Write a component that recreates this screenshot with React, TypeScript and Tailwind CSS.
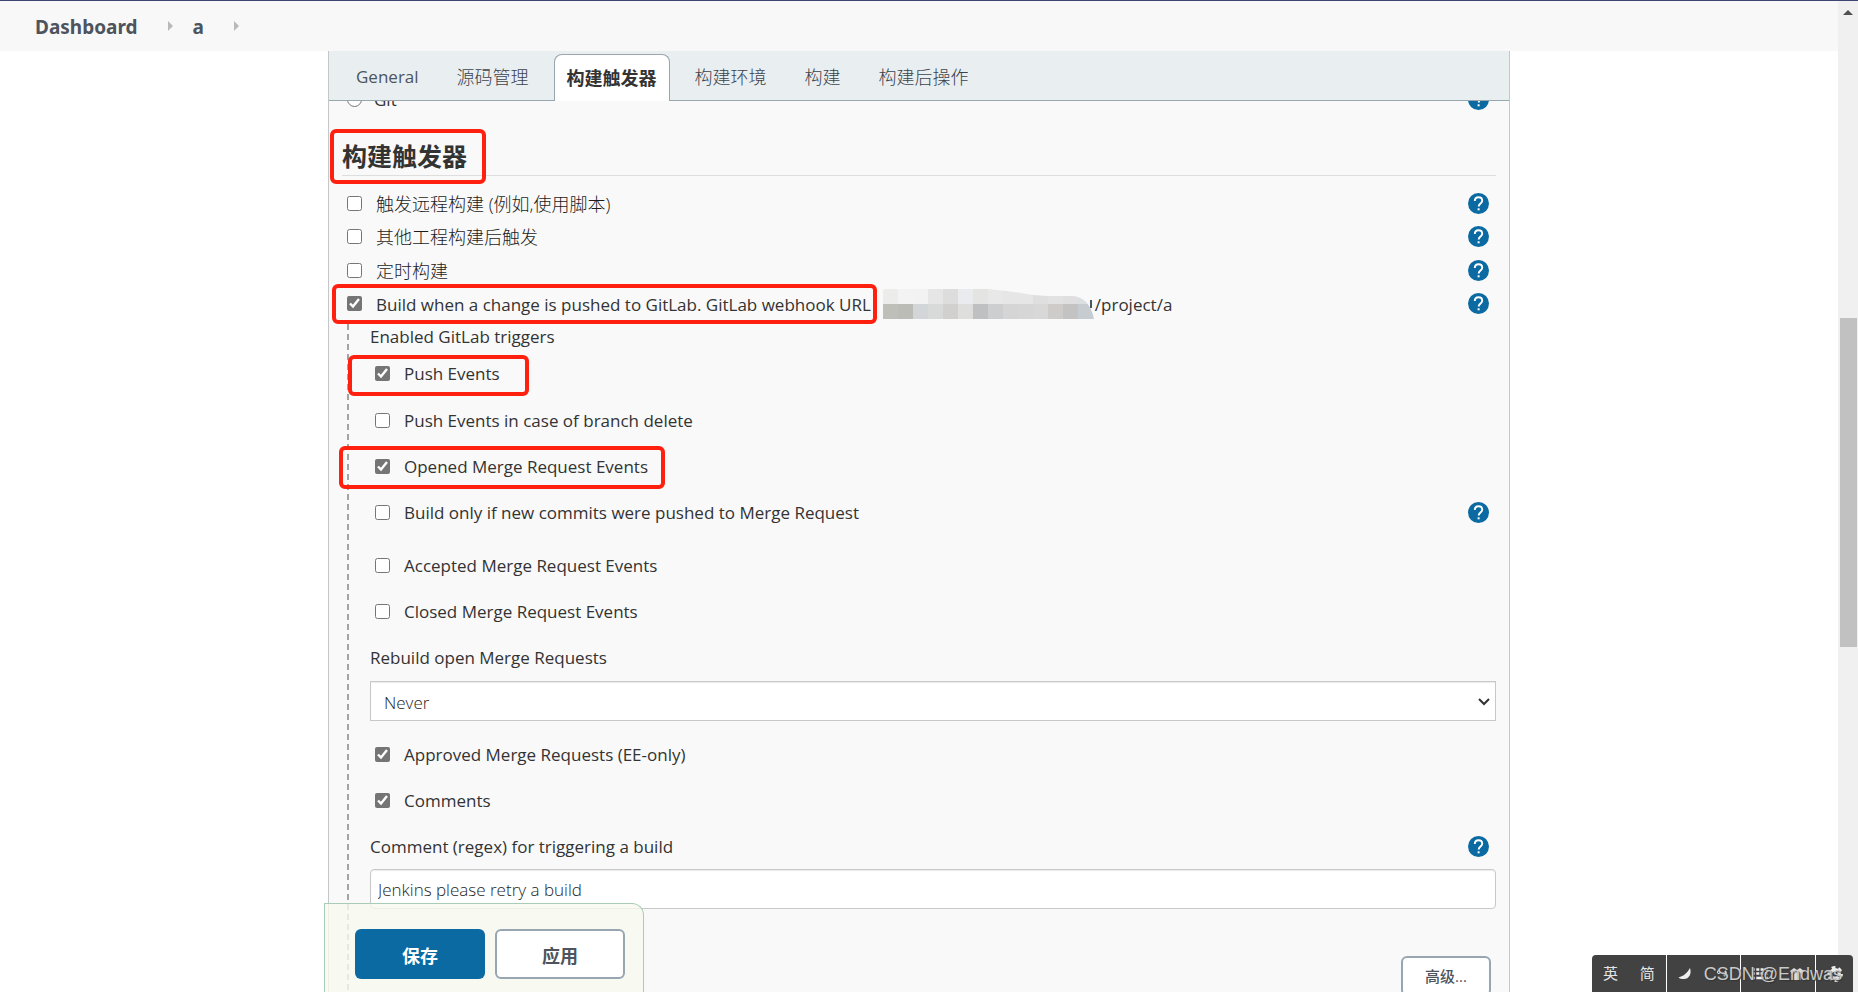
import type { ReactNode } from "react";

const tabs = ["General", "源码管理", "构建触发器", "构建环境", "构建", "构建后操作"];

const topMosaic = ["#ececea", "#f3f3f3", "#f2f2f2", "#e6e6e7", "#dddddd", "#e9ebee", "#e4e4e2", "#e8e8e8", "#e6e6e6", "#e6e6e6", "#dfdfdf", "#e2e2e2", "#dfdfdf", "#dcdfe0"];
const bottomMosaic = ["#bfbfba", "#bcbcb6", "#d3d6d8", "#d7dad9", "#d1d0ce", "#dededc", "#bfc0c2", "#cdced0", "#d5d5d6", "#d6d6d6", "#d8d8d8", "#cecbc9", "#c3c3c4", "#c7ccd0"];

function Highlight({ className }: { className: string }) {
  return <span aria-hidden="true" className={`pointer-events-none absolute z-10 rounded-md border-4 border-[#ff2010] ${className}`} />;
}

function HelpButton() {
  return (
    <button type="button" aria-label="Help" className="mr-[7px] ml-auto size-[21px] shrink-0">
      <svg viewBox="0 0 21 21" className="block size-full">
        <circle cx="10.5" cy="10.5" r="10.5" fill="#0b6aa2" />
        <path d="M6.8 8.1C6.8 5.8 8.4 4.3 10.5 4.3s3.7 1.4 3.7 3.4c0 2.6-3.5 3.1-3.5 5.8" fill="none" stroke="#fff" strokeWidth="1.9" />
        <rect x="9.6" y="15.3" width="2" height="2" fill="#fff" />
      </svg>
    </button>
  );
}

type CheckRowProps = {
  id: string;
  children: ReactNode;
  checked?: boolean;
  help?: boolean;
  nested?: boolean;
  cjk?: boolean;
  highlight?: string;
  after?: ReactNode;
};

function CheckRow({ id, children, checked, help, nested, cjk, highlight, after }: CheckRowProps) {
  return (
    <div className={`relative flex items-center ${nested ? "h-[46px] pl-[5px]" : "h-[33px] pl-[5px]"}`}>
      <input id={id} type="checkbox" defaultChecked={checked} className="size-[15px] shrink-0 accent-[#757575]" />
      <label htmlFor={id} className={`pl-3.5 whitespace-nowrap ${cjk ? "text-lg font-light text-[#1c1c1c]" : "pt-0.5 text-[17px] font-medium"}`}>
        {children}
      </label>
      {after}
      {help && <HelpButton />}
      {highlight && <Highlight className={highlight} />}
    </div>
  );
}

function Mosaic() {
  return (
    <svg viewBox="0 0 212 30" className="ml-3 h-[30px] w-[212px] shrink-0" aria-hidden="true">
      <clipPath id="smear">
        <path d="M0 2Q0 0 2 0H105Q125 2 138 4Q152 7 165 7H188Q206 7 211 30H0Z" />
      </clipPath>
      <path d="M208 11v8" stroke="#456" strokeWidth="2" />
      <g clipPath="url(#smear)">
        {topMosaic.map((fill, i) => (
          <rect key={`t${i}`} x={i * 15} y="0" width={i === 13 ? 17 : 15} height="15" fill={fill} />
        ))}
        {bottomMosaic.map((fill, i) => (
          <rect key={`b${i}`} x={i * 15} y="15" width={i === 13 ? 17 : 15} height="15" fill={fill} />
        ))}
      </g>
    </svg>
  );
}

function Crumb() {
  return (
    <svg viewBox="0 0 5 10" className="h-2.5 w-[5px]" aria-hidden="true">
      <path d="M0 0l5 5-5 5z" fill="#b9b9b9" />
    </svg>
  );
}

function ImeBar() {
  return (
    <div className="absolute right-[5px] bottom-0 z-30 flex h-[37px] w-[261px] items-center rounded-t-sm bg-[#3c3c3c]/97 text-[15px] text-[#e4e4e4]">
      <div className="flex h-full flex-1 items-center justify-around border-r border-white">
        <span>英</span>
        <span>简</span>
      </div>
      <div className="flex h-full flex-1 items-center justify-around border-r border-white">
        <svg viewBox="0 0 14 14" className="size-3.5">
          <path d="M12 1c2 6-1 11-6 11-2.500 0-4.500-.5-5.500-1.500C6 9 9 6 12 1z" fill="#eee" />
        </svg>
        <svg viewBox="0 0 14 14" className="size-3.5">
          <circle cx="4" cy="5" r="1.700" fill="none" stroke="#ddd" />
          <path d="M10 4q2 2-1 5" fill="none" stroke="#ddd" strokeWidth="2" />
        </svg>
      </div>
      <div className="flex h-full flex-1 items-center justify-around border-r border-white">
        <svg viewBox="0 0 16 12" className="h-3 w-4">
          <path d="M0 1.500h16M0 5.500h16" stroke="#eee" strokeWidth="2.500" strokeDasharray="3 1.300" />
          <path d="M0 10h16" stroke="#eee" strokeWidth="2.500" strokeDasharray="3 1.300 7.500 1.300" />
        </svg>
        <svg viewBox="0 0 16 14" className="h-3.5 w-4">
          <path d="M5 1l3 2 3-2 4 3-2 3-1.500-1v7h-7V6L3 7 1 4z" fill="#ddd" />
        </svg>
      </div>
      <div className="flex h-full w-[37px] items-center justify-center">
        <svg viewBox="0 0 16 16" className="size-4">
          <circle cx="8" cy="8" r="4.300" fill="none" stroke="#eee" strokeWidth="3.400" />
          <circle cx="8" cy="8" r="6.700" fill="none" stroke="#eee" strokeWidth="2.500" strokeDasharray="3.800 3.200" />
        </svg>
      </div>
      <span className="absolute right-[11px] bottom-1 font-['Liberation_Sans',sans-serif] text-lg whitespace-nowrap text-[#c9c9c9] [text-shadow:1px_1px_1px_#333]">
        CSDN @Endwas
      </span>
    </div>
  );
}

export default function App() {
  return (
    <div className="relative flex h-screen overflow-hidden bg-white font-['Open_Sans','Noto_Sans_CJK_SC',sans-serif] text-[#333]">
      <div className="flex min-w-0 flex-1 flex-col">
        <header className="flex h-[51px] shrink-0 items-center border-t border-[#3f4472] bg-[#f8f8f8] pl-[35px] font-['Noto_Sans',sans-serif] text-[19px] font-bold text-[#4d545d]">
          <a href="#dashboard" className="pt-0.5 pr-[30px]">Dashboard</a>
          <Crumb />
          <a href="#a" className="pt-0.5 pr-[30px] pl-5">a</a>
          <Crumb />
        </header>

        <main className="relative mx-auto flex min-h-0 w-full max-w-[1182px] flex-1 flex-col border-x border-[#c4c6c8] bg-[#f9f9f9]">
          <nav className="z-10 flex h-[50px] shrink-0 items-end gap-3 border-b border-[#98a6ae] bg-[#e9eef1] pl-3.5">
            {tabs.map((tab) => {
              const active = tab === "构建触发器";
              return (
                <a
                  key={tab}
                  href={`#${tab}`}
                  className={`flex h-[47px] items-center px-3 whitespace-nowrap ${
                    active
                      ? "-mb-px rounded-t-lg border border-b-0 border-[#98a6ae] bg-white text-lg font-bold text-[#333]"
                      : tab === "General"
                        ? "border border-transparent text-[17px] text-[#4d545d]"
                        : "border border-transparent text-lg font-light text-[#3c434c]"
                  }`}
                >
                  {tab}
                </a>
              );
            })}
          </nav>

          <form className="min-h-0 flex-1 overflow-hidden px-[13px]">
            <div className="-mt-[17px] flex h-[30px] items-center pl-[5px]">
              <input id="git" type="radio" name="scm" className="size-[15px]" />
              <label htmlFor="git" className="pt-0.5 pl-3 text-[17px]">Git</label>
              <HelpButton />
            </div>

            <div className="relative mt-6 mb-[11px]">
              <h2 className="h-[38px] border-b border-[#dedede] text-[25px] leading-[37px] font-bold">构建触发器</h2>
              <Highlight className="-top-[9px] -left-3 h-[55px] w-[156px]" />
            </div>

            <CheckRow id="remote" cjk help>触发远程构建 (例如,使用脚本)</CheckRow>
            <CheckRow id="upstream" cjk help>其他工程构建后触发</CheckRow>
            <div className="mt-px">
              <CheckRow id="timer" cjk help>定时构建</CheckRow>
            </div>
            <CheckRow
              id="gitlab"
              checked
              help
              highlight="-top-[3px] -left-2.5 h-10 w-[545px]"
              after={
                <>
                  <Mosaic />
                  <span className="pt-0.5 text-[17px] font-medium">/project/a</span>
                </>
              }
            >
              Build when a change is pushed to GitLab. GitLab webhook URL
            </CheckRow>

            <div className="flex">
              <svg className="mt-1 ml-[5px] w-0.5 shrink-0 self-stretch" aria-hidden="true">
                <line x1="1" y1="0" x2="1" y2="100%" stroke="#a3a3a3" strokeWidth="2" strokeDasharray="6 4" />
              </svg>
              <div className="min-w-0 flex-1 pb-10 pl-[21px]">
                <div className="flex h-[30px] items-end text-[17px] leading-[26px] font-medium">Enabled GitLab triggers</div>
                <CheckRow id="push" nested checked highlight="top-[5px] -left-[22px] h-[41px] w-[181px]">Push Events</CheckRow>
                <div className="mt-px">
                  <CheckRow id="push-delete" nested>Push Events in case of branch delete</CheckRow>
                </div>
                <CheckRow id="opened" nested checked highlight="top-[3px] -left-[31px] h-[43px] w-[326px]">Opened Merge Request Events</CheckRow>
                <CheckRow id="new-commits" nested help>Build only if new commits were pushed to Merge Request</CheckRow>
                <div className="mt-[7px]">
                  <CheckRow id="accepted" nested>Accepted Merge Request Events</CheckRow>
                </div>
                <CheckRow id="closed" nested>Closed Merge Request Events</CheckRow>

                <label htmlFor="rebuild" className="flex h-[46px] items-center pt-0.5 text-[17px] font-medium">Rebuild open Merge Requests</label>
                <div className="relative mt-px">
                  <select id="rebuild" className="block h-10 w-full appearance-none border border-[#c8c8c8] bg-white pt-1 pl-[13px] text-[17px] font-light text-[#1c1c1c] shadow-[inset_0_1px_1px_#ececec]">
                    <option>Never</option>
                  </select>
                  <svg viewBox="0 0 12 8" className="pointer-events-none absolute top-[17px] right-[6px] h-2 w-3">
                    <path d="M1 1l5 5 5-5" fill="none" stroke="#333" strokeWidth="2" />
                  </svg>
                </div>

                <div className="mt-2.5">
                  <CheckRow id="approved" nested checked>Approved Merge Requests (EE-only)</CheckRow>
                </div>
                <CheckRow id="comments" nested checked>Comments</CheckRow>
                <div className="flex h-[46px] items-center">
                  <label htmlFor="regex" className="pt-0.5 text-[17px] font-medium">Comment (regex) for triggering a build</label>
                  <HelpButton />
                </div>
                <input id="regex" type="text" defaultValue="Jenkins please retry a build" className="block h-10 w-full rounded border border-[#c8c8c8] bg-white px-[7px] text-[17px] font-light text-[#1c1c1c] shadow-[inset_0_1px_1px_#ececec]" />
                <button type="button" className="mt-[47px] mr-[5px] ml-auto block h-10 w-[90px] rounded-md border-2 border-[#98a6b2] bg-white text-[15px] font-medium text-[#4d545d]">
                  高级...
                </button>
              </div>
            </div>
          </form>

          <div className="absolute bottom-0 -left-[5px] z-20 flex gap-2.5 rounded-tr-xl border border-b-0 border-[#a9ccb8] bg-[#f7f9ef]/80 pt-[25px] pr-[18px] pb-[13px] pl-[30px]">
            <button type="button" className="h-[50px] w-[130px] rounded-md bg-[#0b6aa2] pt-1 text-lg font-bold text-white">保存</button>
            <button type="button" className="h-[50px] w-[130px] rounded-md border-2 border-[#98a6b2] bg-white pt-1 text-lg font-bold text-[#4d545d]">应用</button>
          </div>
        </main>
      </div>

      <div className="flex w-5 shrink-0 flex-col items-center border-t border-[#3f4472] bg-[#f0f0f0]" aria-hidden="true">
        <svg viewBox="0 0 10 5" className="mt-[9px] h-[5px] w-2.5">
          <path d="M0 5l5-5 5 5z" fill="#505050" />
        </svg>
        <div className="mt-[303px] h-[329px] w-[17px] bg-[#c1c1c1]" />
      </div>

      <ImeBar />
    </div>
  );
}
